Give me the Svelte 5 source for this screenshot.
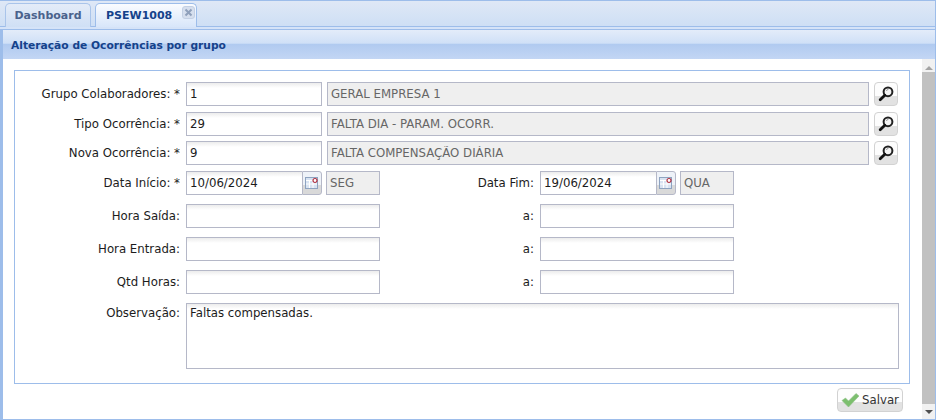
<script>
  const lookups = [
    { label: 'Grupo Colaboradores:', code: '1', desc: 'GERAL EMPRESA 1' },
    { label: 'Tipo Ocorrência:', code: '29', desc: 'FALTA DIA - PARAM. OCORR.' },
    { label: 'Nova Ocorrência:', code: '9', desc: 'FALTA COMPENSAÇÃO DIÁRIA' }
  ];
  const ranges = ['Hora Saída:', 'Hora Entrada:', 'Qtd Horas:'];
</script>

{#snippet lens()}
  <button class="lens" type="button" aria-label="Buscar">
    <svg width="18" height="18" viewBox="0 0 18 18">
      <circle cx="11" cy="6.8" r="4.4" fill="#f4f4f4" stroke="#222" stroke-width="2" />
      <path d="M7.8 10.2 L3.2 14.8" stroke="#111" stroke-width="2.8" stroke-linecap="round" />
      <path d="M9.4 6a2 2 0 0 1 2-1.6" fill="none" stroke="#999" stroke-width="1" />
    </svg>
  </button>
{/snippet}

{#snippet dateField(value)}
  <div class="date">
    <input class="txt date-input" {value} />
    <span class="trigger">
      <svg width="14" height="14" viewBox="0 0 14 14">
        <rect x="0.5" y="1.5" width="12" height="11" fill="#d8e3f2" stroke="#8ea3c0" />
        <path d="M1 4.5h11M1 8h11M4.5 4v8M8 4v8" stroke="#fff" stroke-width="1" />
        <circle cx="10" cy="4.5" r="2" fill="#fff" stroke="#b03040" stroke-width="1.2" />
      </svg>
    </span>
  </div>
{/snippet}

<div class="page">
  <div class="tabbar">
    <div class="tab">Dashboard</div>
    <div class="tab active">
      PSEW1008
      <span class="close">
        <svg width="9" height="9" viewBox="0 0 9 9"><path d="M1.5 1.5l6 6M7.5 1.5l-6 6" stroke="#8fa0bb" stroke-width="2" /></svg>
      </span>
    </div>
  </div>
  <div class="strip"></div>

  <div class="panel">
    <div class="title">Alteração de Ocorrências por grupo</div>
    <div class="body">
      <div class="scroll-area">
        <div class="fieldset">
          {#each lookups as row}
            <div class="row">
              <label class="lbl">{row.label} *</label>
              <input class="txt code" value={row.code} />
              <input class="txt ro desc" value={row.desc} readonly />
              {@render lens()}
            </div>
          {/each}

          <div class="row date-row">
            <label class="lbl">Data Início: *</label>
            {@render dateField('10/06/2024')}
            <input class="txt ro day" value="SEG" readonly />
            <label class="lbl2 lbl-fim">Data Fim:</label>
            {@render dateField('19/06/2024')}
            <input class="txt ro day" value="QUA" readonly />
          </div>

          <div class="ranges">
            {#each ranges as label}
              <div class="row">
                <label class="lbl">{label}</label>
                <input class="txt wide" />
                <label class="lbl2">a:</label>
                <input class="txt wide" />
              </div>
            {/each}

            <div class="row obs">
              <label class="lbl">Observação:</label>
              <textarea class="txt area">Faltas compensadas.</textarea>
            </div>
          </div>
        </div>

        <div class="actions">
          <button class="save" type="button">
            <svg width="19" height="16" viewBox="0 0 19 16">
              <path d="M1 8.5 L4.5 6 L7.5 9 L15 1.5 L18 4 L7.5 15 Z" fill="#7cbf6e" stroke="#8fbf88" stroke-width="0.6" />
            </svg>
            Salvar
          </button>
        </div>
      </div>

      <div class="scrollbar">
        <span class="arrow up"></span>
        <div class="thumb"></div>
        <span class="arrow down"></span>
      </div>
    </div>
  </div>
</div>

<style>
  :global(body) {
    margin: 0;
    background: #fff;
  }
  .page {
    width: 936px;
    height: 420px;
    box-sizing: border-box;
    border: 1px solid #9dbdea;
    border-width: 1px 1px 1px 0;
    display: flex;
    flex-direction: column;
    overflow: hidden;
    font-family: "DejaVu Sans", sans-serif;
    font-size: 11.75px;
    color: #1c1c1c;
  }
  .tabbar {
    height: 26px;
    flex: none;
    display: flex;
    align-items: flex-end;
    gap: 4px;
    padding: 0 0 0 5px;
    background: linear-gradient(#dfe8f6, #cedff5);
    box-sizing: border-box;
    border-bottom: 1px solid #9dbdea;
  }
  .tab {
    height: 24px;
    width: 86px;
    margin-bottom: -1px;
    box-sizing: border-box;
    border: 1px solid #a9c4ea;
    border-bottom: 0;
    border-radius: 5px 5px 0 0;
    background: linear-gradient(#e4ecf8, #cfdff5);
    color: #4a628c;
    font-weight: bold;
    font-size: 11px;
    line-height: 24px;
    text-align: center;
    position: relative;
  }
  .tab.active {
    width: 102px;
    background: linear-gradient(#fafcff, #d8e6fa);
    color: #15428b;
    text-align: left;
    padding-left: 10px;
    border-color: #9dbdea;
  }
  .close {
    position: absolute;
    top: 2px;
    right: 1px;
    width: 11px;
    height: 11px;
    border: 1px solid #c3d0e4;
    border-radius: 3px;
    background: #d6dfee;
    display: flex;
    align-items: center;
    justify-content: center;
  }
  .strip {
    height: 3px;
    flex: none;
    background: #d5e3f8;
    border-bottom: 1px solid #9dbdea;
    box-sizing: border-box;
  }
  .panel {
    flex: 1;
    display: flex;
    flex-direction: column;
    border-left: 3px solid #9dbdea;
    min-height: 0;
  }
  .title {
    height: 29px;
    flex: none;
    box-sizing: border-box;
    padding: 9px 0 0 8px;
    background: linear-gradient(#e3ecf9 0, #cfe0f7 46%, #b0caf0 48%, #c3d6f4 100%);
    color: #15428b;
    font-weight: bold;
    font-size: 10.7px;
  }
  .body {
    flex: 1;
    display: flex;
    min-height: 0;
  }
  .scroll-area {
    flex: 1;
    padding: 11px 12px 0 11px;
    min-width: 0;
  }
  .fieldset {
    height: 314px;
    box-sizing: border-box;
    border: 1px solid #9dbdea;
    padding: 11px 10px 0 0;
  }
  .row {
    display: flex;
    align-items: center;
    height: 24px;
    margin-bottom: 5.67px;
    gap: 5px;
  }
  .date-row {
    gap: 4px;
  }
  .lbl {
    width: 165px;
    flex: none;
    text-align: right;
    margin-right: 1px;
  }
  .date-row .lbl {
    margin-right: 2px;
  }
  .lbl2 {
    width: 149px;
    flex: none;
    text-align: right;
    margin-right: 1px;
  }
  .lbl-fim {
    width: 150px;
    margin-right: 2px;
  }
  .txt {
    box-sizing: border-box;
    height: 24px;
    border: 1px solid #b5b8c8;
    background: linear-gradient(#ececec, #fff 5px);
    font: inherit;
    color: #1c1c1c;
    padding: 0 3px;
    outline: none;
    margin: 0;
    border-radius: 0;
  }
  .code {
    width: 136px;
  }
  .ro {
    background: #efefef;
    color: #666;
  }
  .desc {
    width: 542px;
  }
  .day {
    width: 54px;
  }
  .wide {
    width: 194px;
  }
  .date {
    width: 136px;
    display: flex;
    flex: none;
  }
  .date-input {
    flex: 1;
    min-width: 0;
    border-right: 0;
  }
  .trigger {
    width: 20px;
    height: 24px;
    box-sizing: border-box;
    border: 1px solid #b5b8c8;
    border-radius: 0 3px 3px 0;
    background: linear-gradient(#eef2f8 60%, #d9d9d9 60%);
    display: flex;
    align-items: center;
    justify-content: center;
  }
  .lens {
    width: 24px;
    height: 24px;
    padding: 0;
    border: 1px solid #d2d2d2;
    border-radius: 4px;
    background: linear-gradient(#fdfdfd 60%, #e2e2e2 60%);
    display: flex;
    align-items: center;
    justify-content: center;
  }
  .ranges {
    margin-top: 9px;
  }
  .ranges .row {
    margin-bottom: 9px;
  }
  .obs {
    height: 66px;
    align-items: flex-start;
  }
  .obs .lbl {
    margin-top: 3px;
  }
  .area {
    width: 713px;
    height: 66px;
    resize: none;
    padding: 1px 3px;
    line-height: 16px;
  }
  .actions {
    display: flex;
    justify-content: flex-end;
    padding: 4px 7px 0 0;
  }
  .save {
    width: 66px;
    height: 24px;
    padding: 0;
    box-sizing: border-box;
    border: 1px solid #d2d2d2;
    border-radius: 4px;
    background: linear-gradient(#fdfdfd 60%, #e2e2e2 60%);
    font: inherit;
    color: #333;
    display: flex;
    align-items: center;
    justify-content: center;
    gap: 2px;
  }
  .scrollbar {
    width: 13px;
    flex: none;
    background: #f1f1f1;
    display: flex;
    flex-direction: column;
    align-items: center;
  }
  .thumb {
    flex: 1;
    width: 100%;
    background: #c1c1c1;
    margin: 2px 0 3px;
  }
  .arrow {
    width: 0;
    height: 0;
    margin-top: 7px;
    border-left: 4px solid transparent;
    border-right: 4px solid transparent;
  }
  .arrow.up {
    border-bottom: 4px solid #a3a3a3;
  }
  .arrow.down {
    margin: 3px 0 5px;
    border-top: 4px solid #505050;
  }
</style>
